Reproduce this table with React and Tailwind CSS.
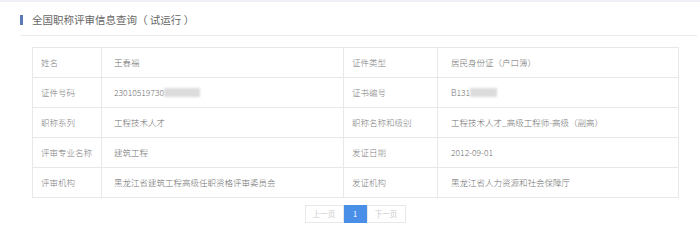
import React from 'react'

const rows = [
    ['姓名', '王春福', '证件类型', '居民身份证（户口簿）'],
    ['证件号码', 'id', '证书编号', 'cert'],
    ['职称系列', '工程技术人才', '职称名称和级别', '工程技术人才_高级工程师-高级（副高）'],
    ['评审专业名称', '建筑工程', '发证日期', '2012-09-01'],
    ['评审机构', '黑龙江省建筑工程高级任职资格评审委员会', '发证机构', '黑龙江省人力资源和社会保障厅'],
]

function Masked({ text, w }) {
    return (
        <span className="inline-flex items-center">
            {text}
            <span className="inline-block h-[9px] bg-[#dcdcdc] blur-[1px]" style={{ width: w }} />
        </span>
    )
}

function Value({ v }) {
    if (v === 'id') return <Masked text="23010519730" w={36} />
    if (v === 'cert') return <Masked text="B131" w={27} />
    return v
}

export default function App() {
    return (
        <div className="w-[700px] h-[248px] bg-white font-['Noto_Sans_CJK_SC','Noto_Sans',sans-serif]">
            <div className="h-[2px] bg-[#eef0f5]" />
            <div className="pl-[20px] pr-[3px]">
                <div className="h-[34px] flex items-center gap-[9px] border-b border-[#ebebeb]">
                    <span className="w-[3px] h-[10px] bg-[#5a7bb5] mt-[2px]" />
                    <span className="text-[10.5px] text-[#666] mt-[2px]">全国职称评审信息查询（ 试运行 ）</span>
                </div>
                <div className="ml-[12px] mt-[11px] w-[646px]">
                    <table className="w-full border-collapse table-fixed text-[8.5px] font-light">
                        <colgroup>
                            <col className="w-[69px]" />
                            <col className="w-[242px]" />
                            <col className="w-[94px]" />
                            <col className="w-[241px]" />
                        </colgroup>
                        <tbody>
                            {rows.map((r, i) => (
                                <tr key={i} className="h-[30px]">
                                    <td className="border border-[#e8e8e8] pl-[8px] text-[#808080]">{r[0]}</td>
                                    <td className="border border-[#e8e8e8] pl-[12px] text-[#707070]"><Value v={r[1]} /></td>
                                    <td className="border border-[#e8e8e8] pl-[8px] text-[#808080]">{r[2]}</td>
                                    <td className="border border-[#e8e8e8] pl-[13px] text-[#707070]"><Value v={r[3]} /></td>
                                </tr>
                            ))}
                        </tbody>
                    </table>
                    <div className="flex justify-center mt-[7px] text-[7.5px]">
                        <div className="w-[39px] h-[18px] border border-[#e8e8e8] flex items-center justify-center text-[#ccc]">上一页</div>
                        <div className="w-[23px] h-[18px] bg-[#4a8fe7] flex items-center justify-center text-white">1</div>
                        <div className="w-[39px] h-[18px] border border-[#e8e8e8] flex items-center justify-center text-[#ccc]">下一页</div>
                    </div>
                </div>
            </div>
        </div>
    )
}
